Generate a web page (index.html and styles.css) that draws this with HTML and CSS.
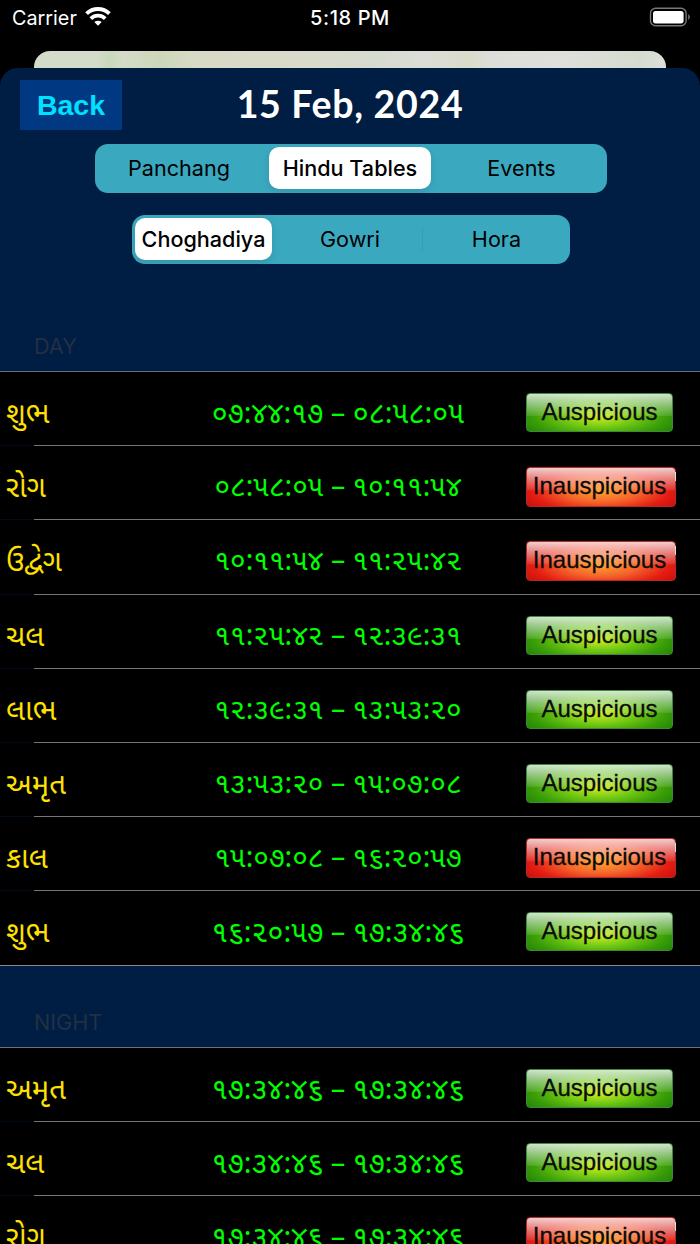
FILE: index.html
```html
<!DOCTYPE html>
<html lang="gu">
<head>
  <meta charset="UTF-8">
  <title>Hindu Tables</title>
  <link rel="stylesheet" href="styles.css">
</head>
<body>

<div class="status">
  <div class="carrier">
    <span>Carrier</span>
    <svg class="wifi" width="26" height="19" viewBox="0 0 26 19">
      <path d="M1.6 6.6a16.5 16.5 0 0 1 22.8 0" fill="none" stroke="#fff" stroke-width="4"/>
      <path d="M5.8 11.6a10.4 10.4 0 0 1 14.4 0" fill="none" stroke="#fff" stroke-width="3.8"/>
      <path d="M13 18.8l-3.7-3.7a5.4 5.4 0 0 1 7.4 0z" fill="#fff"/>
    </svg>
  </div>
  <div class="clock">5:18 PM</div>
  <svg class="battery" width="42" height="20" viewBox="0 0 42 20">
    <rect x="1.5" y="1.2" width="35.6" height="17.6" rx="5" fill="none" stroke="#777" stroke-width="1.4"/>
    <rect x="4" y="4" width="30.6" height="12.4" rx="2.6" fill="#fff"/>
    <path d="M39.2 7q3.4 3 0 6z" fill="#777"/>
  </svg>
</div>

<div class="behind"></div>

<div class="sheet">
  <div class="header">
    <button class="back">Back</button>
    <h1>15 Feb, 2024</h1>
  </div>

  <div class="segment main-tabs">
    <div class="tab first">Panchang</div>
    <div class="tab active">Hindu Tables</div>
    <div class="tab last">Events</div>
  </div>
  <div class="segment sub-tabs">
    <div class="tab active">Choghadiya</div>
    <div class="tab divider">Gowri</div>
    <div class="tab last">Hora</div>
  </div>

  <h2 class="day">DAY</h2>
  <div class="list">
    <div class="row"><span class="name">શુભ</span><span class="time wide">૦૭:૪૪:૧૭ – ૦૮:૫૮:૦૫</span><span class="badge good">Auspicious</span></div>
    <div class="row"><span class="name">રોગ</span><span class="time">૦૮:૫૮:૦૫ – ૧૦:૧૧:૫૪</span><span class="badge bad">Inauspicious</span></div>
    <div class="row"><span class="name">ઉદ્વેગ</span><span class="time">૧૦:૧૧:૫૪ – ૧૧:૨૫:૪૨</span><span class="badge bad">Inauspicious</span></div>
    <div class="row"><span class="name">ચલ</span><span class="time">૧૧:૨૫:૪૨ – ૧૨:૩૯:૩૧</span><span class="badge good">Auspicious</span></div>
    <div class="row"><span class="name">લાભ</span><span class="time">૧૨:૩૯:૩૧ – ૧૩:૫૩:૨૦</span><span class="badge good">Auspicious</span></div>
    <div class="row"><span class="name">અમૃત</span><span class="time">૧૩:૫૩:૨૦ – ૧૫:૦૭:૦૮</span><span class="badge good">Auspicious</span></div>
    <div class="row"><span class="name">કાલ</span><span class="time">૧૫:૦૭:૦૮ – ૧૬:૨૦:૫૭</span><span class="badge bad">Inauspicious</span></div>
    <div class="row"><span class="name">શુભ</span><span class="time wide">૧૬:૨૦:૫૭ – ૧૭:૩૪:૪૬</span><span class="badge good">Auspicious</span></div>
  </div>

  <h2 class="night">NIGHT</h2>
  <div class="list">
    <div class="row"><span class="name">અમૃત</span><span class="time wide">૧૭:૩૪:૪૬ – ૧૭:૩૪:૪૬</span><span class="badge good">Auspicious</span></div>
    <div class="row"><span class="name">ચલ</span><span class="time wide">૧૭:૩૪:૪૬ – ૧૭:૩૪:૪૬</span><span class="badge good">Auspicious</span></div>
    <div class="row"><span class="name">રોગ</span><span class="time wide">૧૭:૩૪:૪૬ – ૧૭:૩૪:૪૬</span><span class="badge bad">Inauspicious</span></div>
  </div>
</div>

</body>
</html>
```
FILE: styles.css
```css
* { box-sizing: border-box; }
body { margin: 0; height: 1244px; overflow: hidden; background: #000; font-family: Inter, sans-serif; display: flex; flex-direction: column; }

/* status bar */
.status { height: 51px; flex: none; display: grid; grid-template-columns: 1fr auto 1fr; padding: 7px 9px 0 12px; color: #fff; font-size: 19.8px; line-height: 22px; align-items: start; }
.carrier { display: flex; gap: 8px; }
.clock { font-weight: 500; font-size: 20px; letter-spacing: 0.6px; margin-left: -3px; }
.battery { justify-self: end; }

.behind { height: 17px; flex: none; margin: 0 34px; border-radius: 16px 16px 0 0; background: linear-gradient(90deg, #d3dbc9 0, #d3dbcb 10%, #c8d8ba 12%, #d4dbc8 14%, #ccd7b9 20%, #d7dac4 25%, #dadacb 40%, #d5dbcf 54%, #dcddd7 62%, #d8dcc9 69%, #dddeda 72%, #dfe0dc 83%, #d5dccf 96%, #dce0da 100%); }

.sheet { flex: 1; min-height: 0; background: #001e43; border-radius: 18px 18px 0 0; overflow: hidden; }
.header { display: grid; grid-template-columns: 102px 1fr 102px; padding: 12px 20px 0; height: 76px; }
.back { height: 50px; padding: 0; border: 0; background: #003882; color: #00e1ff; font: bold 28.5px "Liberation Sans", sans-serif; }
h1 { margin: 0; text-align: center; color: #fff; font: bold 37.5px/48px Lato, sans-serif; letter-spacing: 0.7px; }

.segment { display: grid; height: 49px; padding: 3px; border-radius: 13px; background: #3aa9c0; font-size: 21.6px; }
.tab { display: flex; height: 42px; align-items: center; justify-content: center; white-space: nowrap; }
.active { border-radius: 10px; background: #fff; font-weight: 500; box-shadow: 0 3px 8px rgba(0,0,0,0.12); }
.main-tabs { width: 512px; margin: 0 0 0 95px; grid-template-columns: 171px 162px 1fr; }
.sub-tabs { width: 438px; margin: 22px 0 0 132px; grid-template-columns: 137px 1fr 144px; }
.main-tabs .first { padding-right: 9px; }
.main-tabs .last { padding-left: 8px; }
.sub-tabs .last { padding-left: 3px; }
.divider { padding-left: 5px; background: linear-gradient(#369db2, #369db2) right center / 1px 25px no-repeat; }

h2 { margin: 0; display: flex; align-items: flex-end; padding: 0 34px 13px; color: #232f43; font-weight: 400; font-size: 21.6px; line-height: 24px; }
.day { height: 107px; }
.night { height: 81px; }

.list { border-top: 1px solid #66747f; border-bottom: 1px solid #888; background: #000; }
.row { display: grid; grid-template-columns: 150px 376px 1fr; height: 74.2px; background: linear-gradient(90deg, #000b18 34px, #77776f 34px) bottom / 100% 1px no-repeat; align-items: start; }
.row:last-child { height: 73.6px; background: none; }
.name, .time { padding-top: 26px; font-family: "Noto Sans Gujarati", "Noto Sans", sans-serif; line-height: 36px; white-space: nowrap; }
.name { padding-left: 6px; color: #ffe100; font-size: 29.3px; }
.time { color: #00ff00; font-size: 28.4px; text-align: center; }
.wide { font-size: 29px; }

.badge { margin-top: 21px; width: 147px; height: 39px; border: 1px solid #3d8a3d; border-radius: 4px; color: #0b0b0b; font: 24px/36px "Liberation Sans", sans-serif; text-align: center; -webkit-text-stroke: 0.3px #0b0b0b; }
.good { background: linear-gradient(rgba(255,255,255,0.8), rgba(255,255,255,0.12) 58%, transparent 60%), radial-gradient(ellipse at 50% 60%, #d4ee25 0, #72c914 35%, #399d08 65%, #137303 100%); }
.bad { position: relative; width: 150px; height: 40px; padding-right: 3px; border-color: #b22b24; background: linear-gradient(rgba(255,255,255,0.8), rgba(255,255,255,0.1) 58%, transparent 60%), radial-gradient(ellipse at 50% 60%, #ffa32e 0, #f5652c 35%, #e41d13 65%, #b50604 100%); }
/* light nick beside the red button */
.bad::after { content: ""; position: absolute; right: -1px; top: 4px; width: 1px; height: 9px; background: #ddd; }
```
